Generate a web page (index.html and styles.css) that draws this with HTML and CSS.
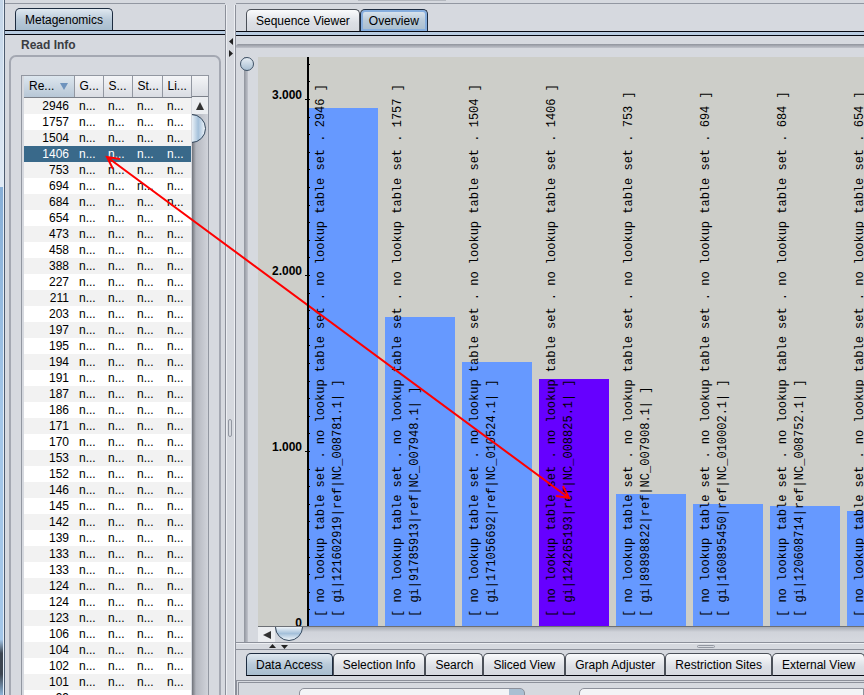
FILE: index.html
```html
<!DOCTYPE html>
<html lang="en">
<head>
<meta charset="utf-8">
<title>Metagenomics</title>
<link rel="stylesheet" href="styles.css">
</head>
<body>
<div class="window">
  <div class="edge"></div>
  <aside class="side">
    <div class="tabs" role="tablist"><button class="tab selected" role="tab">Metagenomics</button></div>
    <div class="strip"></div>
    <h2 class="group-title">Read Info</h2>
    <section class="group">
      <div class="table-frame">
        <table class="reads">
          <colgroup><col class="c-num"><col class="c-txt"><col class="c-txt"><col class="c-wide"><col class="c-txt"></colgroup>
          <thead><tr><th class="sorted">Re... <svg width="8" height="7" viewBox="0 0 8 7"><path d="M0 0h8L4 7z" fill="#6e93bd"/></svg></th><th>G...</th><th>S...</th><th>St...</th><th>Li...</th></tr></thead>
          <tbody>
            <tr><td>2946</td><td>n...</td><td>n...</td><td>n...</td><td>n...</td></tr>
            <tr><td>1757</td><td>n...</td><td>n...</td><td>n...</td><td>n...</td></tr>
            <tr><td>1504</td><td>n...</td><td>n...</td><td>n...</td><td>n...</td></tr>
            <tr class="current"><td>1406</td><td>n...</td><td>n...</td><td>n...</td><td>n...</td></tr>
            <tr><td>753</td><td>n...</td><td>n...</td><td>n...</td><td>n...</td></tr>
            <tr><td>694</td><td>n...</td><td>n...</td><td>n...</td><td>n...</td></tr>
            <tr><td>684</td><td>n...</td><td>n...</td><td>n...</td><td>n...</td></tr>
            <tr><td>654</td><td>n...</td><td>n...</td><td>n...</td><td>n...</td></tr>
            <tr><td>473</td><td>n...</td><td>n...</td><td>n...</td><td>n...</td></tr>
            <tr><td>458</td><td>n...</td><td>n...</td><td>n...</td><td>n...</td></tr>
            <tr><td>388</td><td>n...</td><td>n...</td><td>n...</td><td>n...</td></tr>
            <tr><td>227</td><td>n...</td><td>n...</td><td>n...</td><td>n...</td></tr>
            <tr><td>211</td><td>n...</td><td>n...</td><td>n...</td><td>n...</td></tr>
            <tr><td>203</td><td>n...</td><td>n...</td><td>n...</td><td>n...</td></tr>
            <tr><td>197</td><td>n...</td><td>n...</td><td>n...</td><td>n...</td></tr>
            <tr><td>195</td><td>n...</td><td>n...</td><td>n...</td><td>n...</td></tr>
            <tr><td>194</td><td>n...</td><td>n...</td><td>n...</td><td>n...</td></tr>
            <tr><td>191</td><td>n...</td><td>n...</td><td>n...</td><td>n...</td></tr>
            <tr><td>187</td><td>n...</td><td>n...</td><td>n...</td><td>n...</td></tr>
            <tr><td>186</td><td>n...</td><td>n...</td><td>n...</td><td>n...</td></tr>
            <tr><td>171</td><td>n...</td><td>n...</td><td>n...</td><td>n...</td></tr>
            <tr><td>170</td><td>n...</td><td>n...</td><td>n...</td><td>n...</td></tr>
            <tr><td>153</td><td>n...</td><td>n...</td><td>n...</td><td>n...</td></tr>
            <tr><td>152</td><td>n...</td><td>n...</td><td>n...</td><td>n...</td></tr>
            <tr><td>146</td><td>n...</td><td>n...</td><td>n...</td><td>n...</td></tr>
            <tr><td>145</td><td>n...</td><td>n...</td><td>n...</td><td>n...</td></tr>
            <tr><td>142</td><td>n...</td><td>n...</td><td>n...</td><td>n...</td></tr>
            <tr><td>139</td><td>n...</td><td>n...</td><td>n...</td><td>n...</td></tr>
            <tr><td>133</td><td>n...</td><td>n...</td><td>n...</td><td>n...</td></tr>
            <tr><td>133</td><td>n...</td><td>n...</td><td>n...</td><td>n...</td></tr>
            <tr><td>124</td><td>n...</td><td>n...</td><td>n...</td><td>n...</td></tr>
            <tr><td>124</td><td>n...</td><td>n...</td><td>n...</td><td>n...</td></tr>
            <tr><td>123</td><td>n...</td><td>n...</td><td>n...</td><td>n...</td></tr>
            <tr><td>106</td><td>n...</td><td>n...</td><td>n...</td><td>n...</td></tr>
            <tr><td>104</td><td>n...</td><td>n...</td><td>n...</td><td>n...</td></tr>
            <tr><td>102</td><td>n...</td><td>n...</td><td>n...</td><td>n...</td></tr>
            <tr><td>101</td><td>n...</td><td>n...</td><td>n...</td><td>n...</td></tr>
            <tr><td>99</td><td>n...</td><td>n...</td><td>n...</td><td>n...</td></tr>
          </tbody>
        </table>
        <div class="vscroll">
          <div class="corner"></div>
          <button class="scroll-up" aria-label="Scroll up"><svg width="8" height="8" viewBox="0 0 8 8"><path d="M4 0l4 8H0z" fill="#333"/></svg></button>
          <div class="vthumb"></div>
        </div>
      </div>
    </section>
  </aside>

  <div class="vsplit">
    <svg width="6" height="20" viewBox="0 0 6 20"><path d="M5 0v7L1 3.5zM1 12v7l4-3.500z" fill="#222"/></svg>
    <div class="vgrip"></div>
  </div>

  <main class="main">
    <div class="toolbar-edge"></div>
    <div class="tabs" role="tablist"><button class="tab" role="tab">Sequence Viewer</button><button class="tab selected focus" role="tab">Overview</button></div>
    <div class="strip"></div>
    <div class="groove"></div>
    <div class="view">
      <input class="zoom" type="range" min="0" max="100" value="0" aria-label="Zoom">
      <div class="plot-column">
        <div class="plot">
          <div class="axis"><span>0</span><span>1.000</span><span>2.000</span><span>3.000</span></div>
          <div class="bars">
            <div class="ticks"></div>
            <div class="slot"><div class="bar" style="--v:2946"></div><p class="label">[ no lookup table set . no lookup table set . no lookup table set . 2946 ]<br>[ gi|121602919|ref|NC_008781.1| ]</p></div>
            <div class="slot"><div class="bar" style="--v:1757"></div><p class="label">[ no lookup table set . no lookup table set . no lookup table set . 1757 ]<br>[ gi|91785913|ref|NC_007948.1| ]</p></div>
            <div class="slot"><div class="bar" style="--v:1504"></div><p class="label">[ no lookup table set . no lookup table set . no lookup table set . 1504 ]<br>[ gi|171056692|ref|NC_010524.1| ]</p></div>
            <div class="slot"><div class="bar picked" style="--v:1406"></div><p class="label">[ no lookup table set . no lookup table set . no lookup table set . 1406 ]<br>[ gi|124265193|ref|NC_008825.1| ]</p></div>
            <div class="slot"><div class="bar" style="--v:753"></div><p class="label">[ no lookup table set . no lookup table set . no lookup table set . 753 ]<br>[ gi|89898822|ref|NC_007908.1| ]</p></div>
            <div class="slot"><div class="bar" style="--v:694"></div><p class="label">[ no lookup table set . no lookup table set . no lookup table set . 694 ]<br>[ gi|160895450|ref|NC_010002.1| ]</p></div>
            <div class="slot"><div class="bar" style="--v:684"></div><p class="label">[ no lookup table set . no lookup table set . no lookup table set . 684 ]<br>[ gi|120608714|ref|NC_008752.1| ]</p></div>
            <div class="slot"><div class="bar" style="--v:654"></div><p class="label">[ no lookup table set . no lookup table set . no lookup table set . 654 ]</p></div>
          </div>
        </div>
        <div class="hscroll">
          <button class="scroll-left" aria-label="Scroll left"><svg width="8" height="8" viewBox="0 0 8 8"><path d="M0 4l8-4v8z" fill="#333"/></svg></button>
          <div class="hthumb"></div>
        </div>
      </div>
    </div>
    <div class="hsplit">
      <svg width="20" height="5" viewBox="0 0 20 5"><path d="M0 4h7L3.500 0zM12 1h7l-3.500 4z" fill="#222"/></svg>
      <div class="hgrip"></div>
    </div>
    <div class="tabs lower" role="tablist"><button class="tab selected" role="tab">Data Access</button><button class="tab" role="tab">Selection Info</button><button class="tab" role="tab">Search</button><button class="tab" role="tab">Sliced View</button><button class="tab" role="tab">Graph Adjuster</button><button class="tab" role="tab">Restriction Sites</button><button class="tab" role="tab">External View</button></div>
    <div class="form">
      <select class="combo" aria-label="Source"><option></option></select>
      <input class="field" type="text" aria-label="Value">
    </div>
  </main>

  <svg class="link" width="480" height="360" viewBox="100 150 480 360"><path d="M107 157L569 498M113 169L107 157L120 159M556 496L569 498L563 486" fill="none" stroke="#f00" stroke-width="2"/></svg>
</div>
</body>
</html>
```
FILE: styles.css
```css
* { box-sizing: border-box; }
body {
  margin: 0;
  background: #d6d9df;
  font: 12px/16px "Liberation Sans", Arial, sans-serif;
  color: #000;
}
button, input, select { font: inherit; color: inherit; margin: 0; }
.window { position: relative; display: flex; height: 100vh; overflow: hidden; }
.edge {
  flex: none;
  width: 5px;
  border-right: 1px solid #4d5c70;
  box-shadow: inset -1px 0 #e4eef8;
  background: linear-gradient(#c3d5e8 0, #dfeaf5 187px, #86aed6 187px, #a3c6e8 60%, #a3c6e8 92%, #3c4550 94%, #3c4550 97%, #8db4d8);
}
.side { flex: none; width: 220px; border-top: 1px solid #9297a1; margin-top: 3px; }
.main { flex: 1; min-width: 0; display: flex; flex-direction: column; }
.toolbar-edge {
  flex: none;
  height: 4px;
  border-bottom: 1px solid #9297a1;
  background: linear-gradient(#b4b8bf, #b4b8bf) 122px 0 / 88px 1px no-repeat;
}

/* Tabs */
.tabs { display: flex; align-items: flex-end; height: 26px; padding-left: 10px; flex: none; }
.main .tabs { height: 27px; }
.tab {
  flex: none;
  height: 22px;
  padding: 0 9px;
  border: 1px solid #4b5058;
  border-bottom: 0;
  border-radius: 5px 5px 0 0;
  background: linear-gradient(#fafbfc, #dcdfe5 60%, #d6d9df);
  line-height: 20px;
  white-space: nowrap;
}
.tab.selected { border-color: #1d2c40; background: linear-gradient(#dfe8f0, #b9cad9 50%, #a8bdce); }
.tab.focus { box-shadow: inset 0 0 0 2px #86aede; padding: 0 8px; }
.strip { flex: none; height: 5px; border: solid #05070f; border-width: 1px 0; background: #b8cbe0; }

/* Read table */
.group-title { margin: 0; padding: 2px 16px; font-size: 12px; line-height: 16px; color: #3a3d42; }
.group {
  height: 100%;
  margin: 0 4px;
  border: 2px solid #a4a8b2;
  border-radius: 7px;
  padding: 18px 10px 0;
}
.table-frame { display: flex; border: 1px solid #9297a1; padding-left: 2px; width: 188px; }
.reads { flex: none; width: 167px; border-collapse: collapse; table-layout: fixed; }
.c-num { width: 50px; }
.c-txt { width: 29px; }
.c-wide { width: 30px; }
.reads th {
  height: 21px;
  padding: 0 0 0 5px;
  text-align: left;
  font-weight: normal;
  white-space: nowrap;
  border-right: 1px solid #9297a1;
  border-bottom: 1px solid #7b8089;
  background: linear-gradient(#f4f5f7, #d9dce2);
}
.reads th.sorted { background: linear-gradient(#dde6ee, #b7c7d6); }
.sorted svg { margin-left: 2px; }
.reads td { height: 16px; padding: 0 0 0 5px; line-height: 16px; white-space: nowrap; }
.reads td:first-child { text-align: right; padding-right: 5px; }
.reads tbody tr { background: #fff; }
.reads tbody tr:nth-child(odd) { background: #f2f2f2; }
.reads tbody tr.current { background: #39698a; color: #fff; }
.vscroll {
  flex: 1;
  display: flex;
  flex-direction: column;
  overflow: hidden;
  background: linear-gradient(90deg, #6f7279, #b4b7bf 4px, #d0d3da);
}
.corner { height: 21px; background: linear-gradient(#f4f5f7, #d9dce2); border-bottom: 1px solid #7b8089; }
.scroll-up { height: 17px; border: 0; padding: 0; background: #eceef1; line-height: 12px; }
.vthumb {
  width: 29px;
  height: 29px;
  margin-left: -15px;
  border: 1px solid #33475c;
  border-radius: 50%;
  background: linear-gradient(90deg, #eef4f9 50%, #a4c0da 75%, #eef4f9);
}

/* Split dividers */
.vsplit {
  flex: none;
  width: 11px;
  margin-top: 5px;
  padding: 33px 2px 0;
  border: 1px solid #8c909a;
  border-width: 0 1px;
  box-shadow: inset 1px 0 #eceef2, inset -1px 0 #eceef2;
  display: grid;
  grid-template-rows: auto 7fr auto 5fr;
}
.vgrip { grid-row: 3; width: 4px; height: 18px; border: 1px solid #9297a1; border-radius: 2px; }
.hsplit {
  flex: none;
  display: grid;
  grid-template-columns: auto 11fr auto 4fr;
  align-items: center;
  height: 8px;
  padding-left: 33px;
  border: solid #8c909a;
  border-width: 1px 0;
  box-shadow: inset 0 1px #eceef2;
}
.hgrip { grid-column: 3; width: 18px; height: 3px; border: 1px solid #9297a1; border-radius: 2px; }

/* Overview chart */
.groove { flex: none; height: 5px; margin: 8px 0 0; border-radius: 3px 0 0 3px; background: linear-gradient(#8f939c, #c1c4cc 80%, #eceef2); }
.view { flex: 1; min-height: 0; display: flex; padding-top: 8px; }
.zoom {
  flex: none;
  width: 16px;
  margin: 0 3px;
  writing-mode: vertical-lr;
  appearance: none;
  background: linear-gradient(90deg, transparent 5px, #8f939c 5px, #c1c4cc 9px, #eceef2 10px, transparent 10px);
}
.zoom::-webkit-slider-thumb {
  appearance: none;
  width: 14px;
  height: 14px;
  border: 1px solid #3f5266;
  border-radius: 50%;
  background: linear-gradient(#e6edf4, #a9bfd2);
}
.plot-column { flex: 1; min-width: 0; display: flex; flex-direction: column; }
.plot { flex: 1; min-height: 0; display: flex; background: #cdcec9; border-bottom: 1px solid #6d7075; overflow: hidden; }
.axis {
  flex: none;
  width: 49px;
  padding-right: 5px;
  display: flex;
  flex-direction: column-reverse;
  font-weight: bold;
  text-align: right;
}
.axis span { flex: none; height: 176px; padding-top: 165px; line-height: 16px; }
.bars { position: relative; flex: 1; min-width: 0; display: flex; gap: 7px; padding-left: 1px; }
.ticks {
  position: absolute;
  inset: 0 auto -2px -2px;
  width: 5px;
  background:
    linear-gradient(#000, #000) 2px 0 / 2px 100% no-repeat,
    repeating-linear-gradient(0deg, #000 0 1px, transparent 1px 176px) 0 0 / 5px 100% no-repeat,
    repeating-linear-gradient(0deg, #000 0 1px, transparent 1px 17.6px) 3px 0 / 2px 100% no-repeat;
  z-index: 1;
}
.slot { flex: none; position: relative; width: 70px; display: flex; align-items: flex-end; }
.bar { width: 100%; height: calc(var(--v) / 3237 * 100%); background: #6699ff; }
.bar.picked { background: #6600ff; }
.label {
  position: absolute;
  left: 5px;
  top: calc(100% - 9px);
  margin: 0;
  transform: rotate(-90deg);
  transform-origin: 0 0;
  font: 12px/17px "Liberation Mono", "Courier New", monospace;
  white-space: nowrap;
}
.hscroll { flex: none; display: flex; height: 15px; overflow: hidden; background: linear-gradient(#a7abb3, #d0d3da 5px, #d6d9df); }
.scroll-left { width: 17px; border: 0; padding: 0; background: #eceef1; line-height: 12px; }
.hthumb {
  flex: none;
  width: 28px;
  height: 28px;
  margin-top: -14px;
  border: 1px solid #33475c;
  border-radius: 50%;
  background: linear-gradient(#eef4f9 50%, #a4c0da 75%, #eef4f9);
}

/* Lower panel */
.main .lower { height: 26px; overflow: hidden; padding-top: 3px; }
.lower .tab { height: 23px; border-bottom: 1px solid #05070f; }
.form {
  flex: none;
  display: flex;
  gap: 54px;
  height: 15px;
  margin-top: 4px;
  padding: 5px 0 0 60px;
  border: 3px double #8c909a;
  border-width: 3px 0 0 3px;
  overflow: hidden;
}
.combo {
  width: 226px;
  height: 24px;
  appearance: none;
  border: 1px solid #8c909a;
  border-radius: 5px;
  background: linear-gradient(90deg, #f3f4f6 209px, #a9bfd2 209px);
}
.field { flex: 1; min-width: 0; height: 24px; border: 1px solid #8c909a; border-radius: 5px 0 0 5px; background: #f3f4f6; }

/* Arrow joining the selected row with its bar */
.link { position: absolute; left: 100px; top: 150px; pointer-events: none; }
```
